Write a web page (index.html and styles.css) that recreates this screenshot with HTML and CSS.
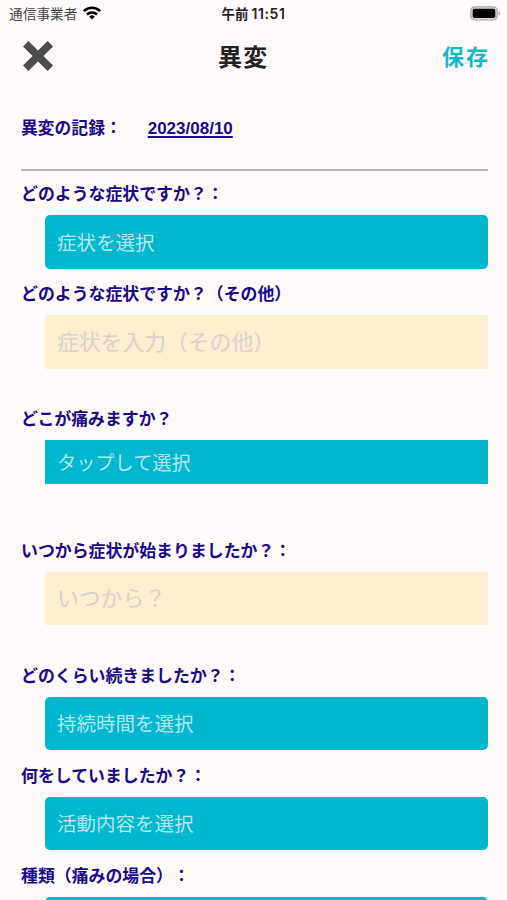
FILE: index.html
```html
<!DOCTYPE html>
<html lang="ja">
<head>
<meta charset="utf-8">
<title>異変</title>
<link rel="stylesheet" href="styles.css">
</head>
<body>
<div class="status">
  <div class="carrier"><span>通信事業者</span>
    <svg class="wifi" width="18" height="14" viewBox="0 0 18 14"><g fill="none" stroke="#000" stroke-width="2.5"><path d="M.9 5.2a11.5 11.5 0 0 1 16.2 0"/><path d="M4 8.5a7.1 7.1 0 0 1 10 0"/></g><path d="M9 13.6 6.1 10.7a4.1 4.1 0 0 1 5.8 0z"/></svg>
  </div>
  <div class="time">午前<span class="digits">11:51</span></div>
  <svg class="battery" width="31" height="15" viewBox="0 0 31 15"><rect x=".8" y=".8" width="26.4" height="13.2" rx="4" fill="#ddd8d8" stroke="#aaa6a6" stroke-width="1.2"/><rect x="2.7" y="2.8" width="22.6" height="9.2" rx="1.8"/><path d="M28.5 5.2c2.2.7 2.2 3.7 0 4.4z" fill="#aaa6a6"/></svg>
</div>
<header class="nav">
  <svg class="close" width="30" height="30" viewBox="0 0 30 30"><path d="M2.7 2.7 27.3 27.3M27.3 2.7 2.7 27.3" stroke="#4b4b4b" stroke-width="7.6"/></svg>
  <h1 class="title">異変</h1>
  <div class="save">保存</div>
</header>
<main class="form">
  <div class="record"><span>異変の記録：</span><span class="date">2023/08/10</span></div>
  <section class="group"><div class="label">どのような症状ですか？：</div><div class="field">症状を選択</div></section>
  <section class="group wide"><div class="label">どのような症状ですか？（その他）</div><div class="field input">症状を入力（その他）</div></section>
  <section class="group wider"><div class="label">どこが痛みますか？</div><div class="field tap">タップして選択</div></section>
  <section class="group wide"><div class="label">いつから症状が始まりましたか？：</div><div class="field input">いつから？</div></section>
  <section class="group"><div class="label">どのくらい続きましたか？：</div><div class="field">持続時間を選択</div></section>
  <section class="group"><div class="label">何をしていましたか？：</div><div class="field">活動内容を選択</div></section>
  <section class="group"><div class="label">種類（痛みの場合）：</div><div class="field"></div></section>
</main>
</body>
</html>
```
FILE: styles.css
```css
* { box-sizing: border-box; }
html, body { height: 100%; }
body {
  margin: 0;
  overflow: hidden;
  background: #fffafa;
  font-family: "Noto Sans CJK JP", sans-serif;
  white-space: nowrap;
  text-spacing-trim: space-all;
}
.status {
  display: grid;
  grid-template-columns: 1fr auto 1fr;
  align-items: center;
  height: 27px;
  padding: 0 6px 0 7px;
  color: #222;
}
.carrier { display: flex; align-items: center; gap: 6px; margin-left: 2px; font-size: 13.7px; line-height: 20px; color: #444; }
.carrier span { margin-top: -1px; }
.wifi { margin-top: -1px; }
.time { margin-right: 1px; font-size: 13.4px; line-height: 20px; font-weight: 700; }
.digits { margin-left: 3px; font-family: Inter, sans-serif; font-size: 14px; font-weight: 600; letter-spacing: .6px; }
.battery { justify-self: end; margin-top: -1px; }
.nav {
  display: grid;
  grid-template-columns: 201px auto 1fr;
  align-items: center;
  height: 57px;
  padding: 0 17px;
}
.close { margin-left: 6px; }
.title { margin: 0; font-size: 24px; line-height: 34px; font-weight: 700; letter-spacing: 1.2px; color: #222; }
.save { justify-self: end; margin-bottom: 2px; font-size: 22px; line-height: 32px; font-weight: 700; letter-spacing: 2px; color: #17b6cf; }
.form { padding: 0 19.5px 0 21px; }
.record {
  display: flex;
  align-items: center;
  height: 87px;
  border-bottom: 2px solid #bcb9ba;
  margin-bottom: 2px;
  color: #180a8c;
  font-size: 16.8px;
  font-weight: 700;
}
.date {
  margin: 4px 0 0 26px;
  font-family: "Liberation Sans", sans-serif;
  font-size: 17px;
  text-decoration: underline;
  text-underline-offset: 2px;
  text-decoration-thickness: 1.5px;
}
.group { margin-bottom: 4.5px; }
.wide { margin-bottom: 29.5px; }
.wider { margin-bottom: 45.5px; }
.label { height: 42px; line-height: 40px; font-size: 16.9px; font-weight: 700; color: #180a8c; }
.field {
  display: flex;
  align-items: center;
  height: 53.5px;
  margin-left: 24px;
  padding: 0 0 1.5px 12px;
  border-radius: 5px;
  background: #00b7d0;
  color: #b9e6ed;
  font-size: 19.5px;
}
.input { padding-bottom: 3px; border-radius: 0; background: #ffeecf; color: #d8d3d0; font-size: 21.8px; }
.tap { height: 44px; padding-bottom: 0; border-radius: 0; font-size: 19.2px; }
```
